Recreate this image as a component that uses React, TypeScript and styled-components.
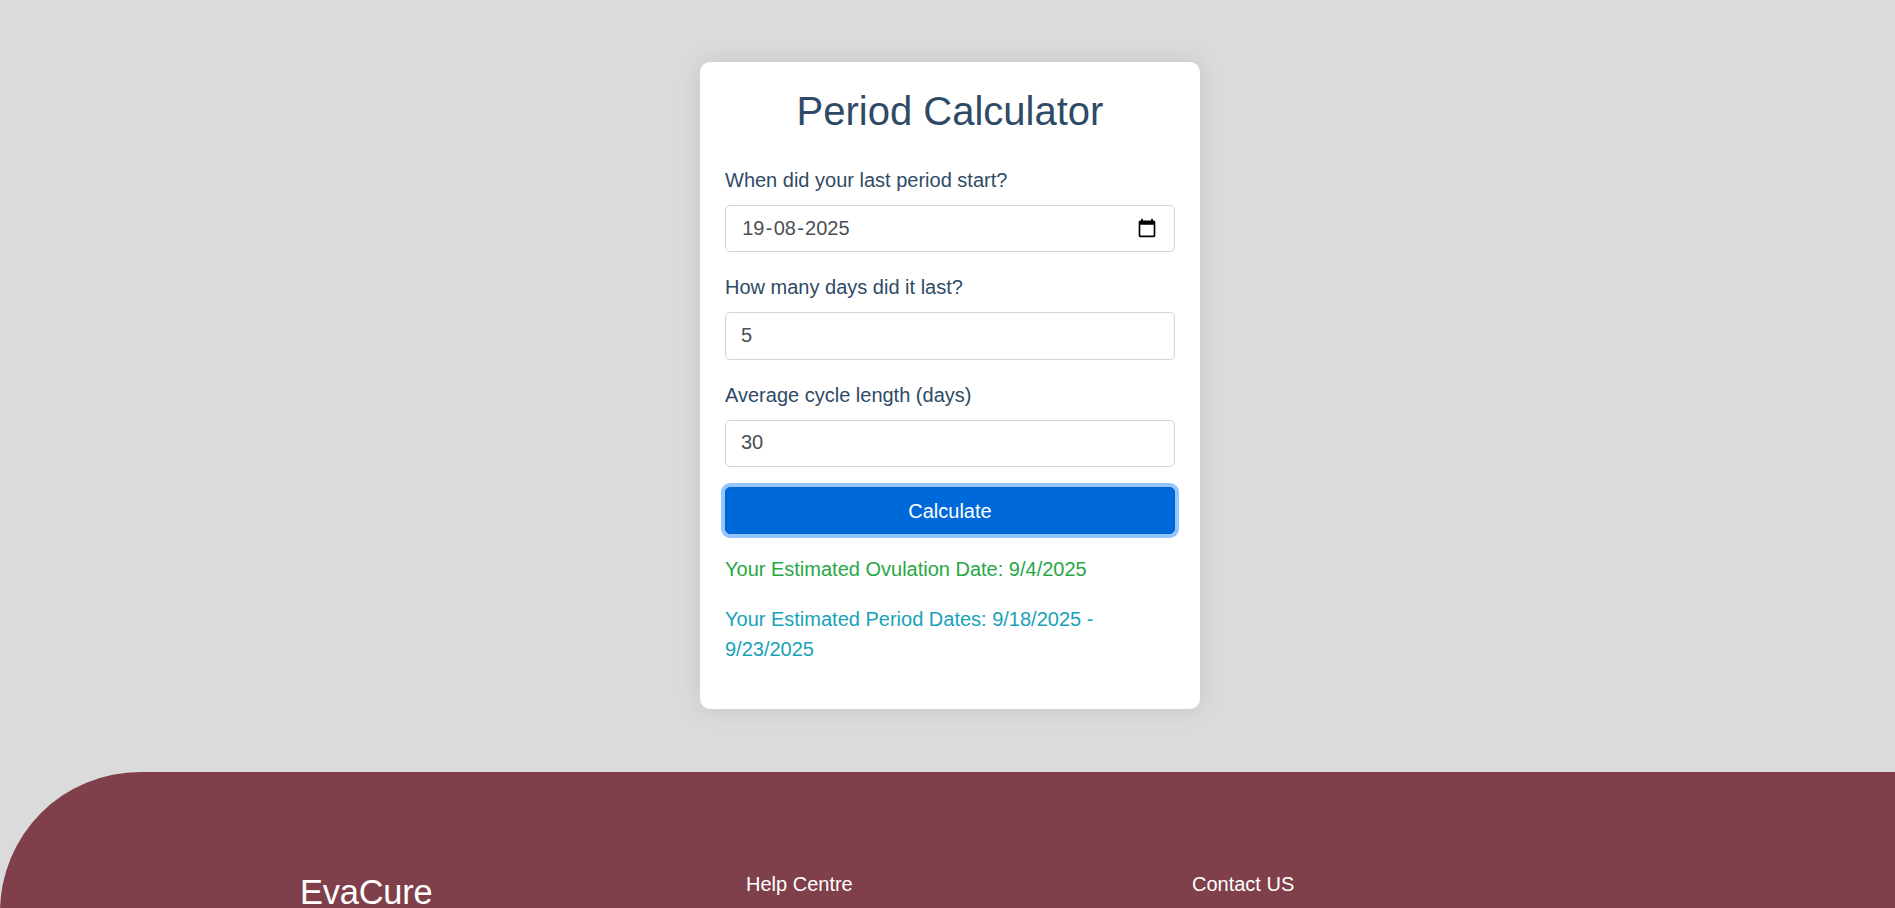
import React from "react";
import styled, { createGlobalStyle } from "styled-components";

const GlobalStyle = createGlobalStyle`
  *, *::before, *::after { box-sizing: border-box; }
  html, body { margin: 0; padding: 0; }
  body {
    height: 908px;
    overflow: hidden;
    background: #dbdbdb;
    font-family: Arial, "Liberation Sans", sans-serif;
    font-size: 20px;
    line-height: 30px;
  }
`;

const Page = styled.div`
  height: 908px;
  overflow: hidden;
`;

const Main = styled.main`
  display: flex;
  justify-content: center;
  height: 772px;
  padding: 62px 0 0 5px;
`;

const Card = styled.section`
  width: 500px;
  height: 647px;
  padding: 25px;
  border-radius: 10px;
  background: #fff;
  color: #34495e;
  box-shadow: 0 0 25px rgba(0, 0, 0, 0.1);
`;

const Title = styled.h2`
  margin: 0 0 30px;
  color: #2f4a66;
  font-size: 40px;
  font-weight: 400;
  line-height: 48px;
  text-align: center;
`;

const Field = styled.div`
  margin-bottom: 20px;
`;

const Label = styled.label`
  display: block;
  margin-bottom: 10px;
  color: #2f4a66;
`;

const Control = styled.div`
  display: flex;
  align-items: center;
  justify-content: space-between;
  height: 47.3px;
  padding: 0 17.5px 2px 15px;
  border: 1px solid #ced4da;
  border-radius: 5px;
  color: #495057;
`;

const DatePart = styled.span`
  padding: 0 1.25px;
`;

const CalendarIcon = styled.svg`
  display: block;
  width: 20px;
  height: 20px;
`;

const Submit = styled.button`
  display: block;
  width: 100%;
  height: 47.3px;
  padding: 0;
  border: 1px solid #0062cc;
  border-radius: 5px;
  background: #0069d9;
  box-shadow: 0 0 0 4px #93c5ff;
  color: #fff;
  font: inherit;
`;

const Result = styled.p<{ $color: string }>`
  margin: 20px 0 0;
  color: ${(p) => p.$color};
`;

const Footer = styled.footer`
  display: grid;
  grid-template-columns: repeat(3, 446px);
  height: 400px;
  padding: 97px 0 0 300px;
  border-top-left-radius: 140px;
  background: #7f404c;
  color: #fff;
`;

const Brand = styled.h3`
  margin: 4px 0 0;
  font-size: 34.4px;
  font-weight: 400;
  line-height: 38px;
  letter-spacing: -0.2px;
`;

const FooterHeading = styled.div`
  margin-top: 0;
`;

export default function App() {
  return (
    <Page>
      <GlobalStyle />
      <Main>
        <Card>
          <Title>Period Calculator</Title>
          <Field>
            <Label>When did your last period start?</Label>
            <Control>
              <span>
                <DatePart>19</DatePart>-<DatePart>08</DatePart>-<DatePart>2025</DatePart>
              </span>
              <CalendarIcon viewBox="0 0 24 24" fill="#000">
                <path d="M20 3h-1V1h-2v2H7V1H5v2H4c-1.1 0-2 .9-2 2v16c0 1.1.9 2 2 2h16c1.1 0 2-.9 2-2V5c0-1.1-.9-2-2-2zm0 18H4V8h16v13z" />
              </CalendarIcon>
            </Control>
          </Field>
          <Field>
            <Label>How many days did it last?</Label>
            <Control>5</Control>
          </Field>
          <Field>
            <Label>Average cycle length (days)</Label>
            <Control>30</Control>
          </Field>
          <Submit type="button">Calculate</Submit>
          <Result $color="#28a745">Your Estimated Ovulation Date: 9/4/2025</Result>
          <Result $color="#17a2b8">Your Estimated Period Dates: 9/18/2025 - 9/23/2025</Result>
        </Card>
      </Main>
      <Footer>
        <Brand>EvaCure</Brand>
        <FooterHeading>Help Centre</FooterHeading>
        <FooterHeading>Contact US</FooterHeading>
      </Footer>
    </Page>
  );
}
